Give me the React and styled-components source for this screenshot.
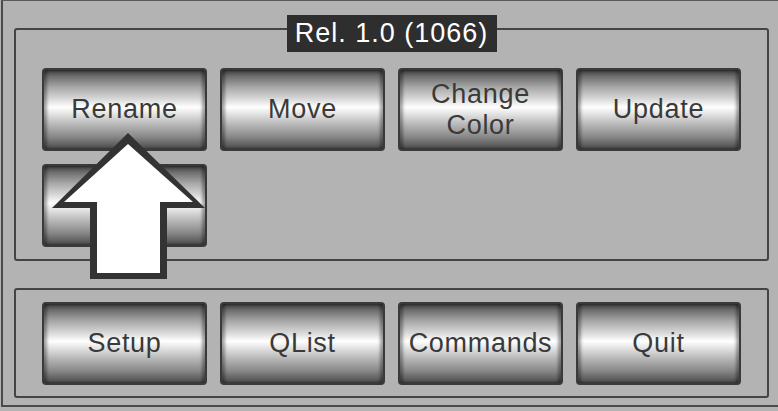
import React from 'react'
import styled, { createGlobalStyle } from 'styled-components'

const GlobalStyle = createGlobalStyle`
  html, body {
    margin: 0;
    padding: 0;
    background: #b3b3b3;
  }
  body {
    width: 778px;
    height: 411px;
    overflow: hidden;
    font-family: "Liberation Sans", Arial, sans-serif;
  }
`

const top = ['Rename', 'Move', 'Change Color', 'Update', '']
const bottom = ['Setup', 'QList', 'Commands', 'Quit']

function App() {
  return (
    <>
      <GlobalStyle />
      <Frame>
        <Group $top>
          <Title>Rel. 1.0 (1066)</Title>
          <Grid>
            {top.map((label, i) => (
              <Button key={i} $wrap={label.includes(' ')}>{label}</Button>
            ))}
          </Grid>
        </Group>
        <Group>
          <Grid>
            {bottom.map((label) => (
              <Button key={label}>{label}</Button>
            ))}
          </Grid>
        </Group>
        <Arrow viewBox="0 0 778 411" width="778" height="411">
          <polygon
            points="128,133 205,208 167,208 167,279 90,279 90,208 52,208"
            fill="#333"
          />
          <polygon
            points="128,144 193,202 160,202 160,273 97,273 97,202 64,202"
            fill="#fff"
          />
        </Arrow>
      </Frame>
    </>
  )
}

export default App

const Frame = styled.div`
  position: relative;
  box-sizing: border-box;
  margin-left: 1px;
  width: 777px;
  height: 407px;
  border-top: 1px solid #5a5a5a;
  border-left: 2px solid #4a4a4a;
  border-bottom: 2px solid #4a4a4a;
  padding: 27px 8px 0 11px;
  display: flex;
  flex-direction: column;
  gap: 27px;
`

const Group = styled.div`
  position: relative;
  box-sizing: border-box;
  width: 755px;
  height: ${(p) => (p.$top ? '233px' : '110px')};
  border: 2px solid #444;
  border-radius: 3px;
  padding: ${(p) => (p.$top ? '38px 26px 0' : '12px 26px 0')};
`

const Title = styled.div`
  position: absolute;
  top: -15px;
  left: 50%;
  transform: translateX(-50%);
  box-sizing: border-box;
  width: 210px;
  height: 37px;
  background: #2e2e2e;
  color: #fff;
  font-size: 27px;
  line-height: 37px;
  text-align: center;
  letter-spacing: 1px;
  white-space: nowrap;
`

const Grid = styled.div`
  display: grid;
  grid-template-columns: repeat(4, 165px);
  grid-auto-rows: 83px;
  column-gap: 13px;
  row-gap: 13px;
`

const Button = styled.div`
  box-sizing: border-box;
  display: flex;
  align-items: center;
  justify-content: center;
  text-align: center;
  padding: 0 ${(p) => (p.$wrap ? '28px' : '2px')};
  border: 2px solid #3a3a3a;
  border-radius: 4px;
  background: linear-gradient(
    to bottom,
    #3c3c3c 0%,
    #6e6e6e 8%,
    #a8a8a8 22%,
    #d6d6d6 36%,
    #ffffff 47%,
    #e2e2e2 56%,
    #b4b4b4 70%,
    #8a8a8a 84%,
    #4a4a4a 100%
  );
  box-shadow: inset 3px 0 3px rgba(0, 0, 0, 0.35), inset -3px 0 3px rgba(0, 0, 0, 0.35);
  color: #3a3a3a;
  font-size: 27px;
  line-height: 31px;
  letter-spacing: 0.7px;
  white-space: ${(p) => (p.$wrap ? 'normal' : 'nowrap')};
`

const Arrow = styled.svg`
  position: absolute;
  left: -3px;
  top: -1px;
  pointer-events: none;
`
